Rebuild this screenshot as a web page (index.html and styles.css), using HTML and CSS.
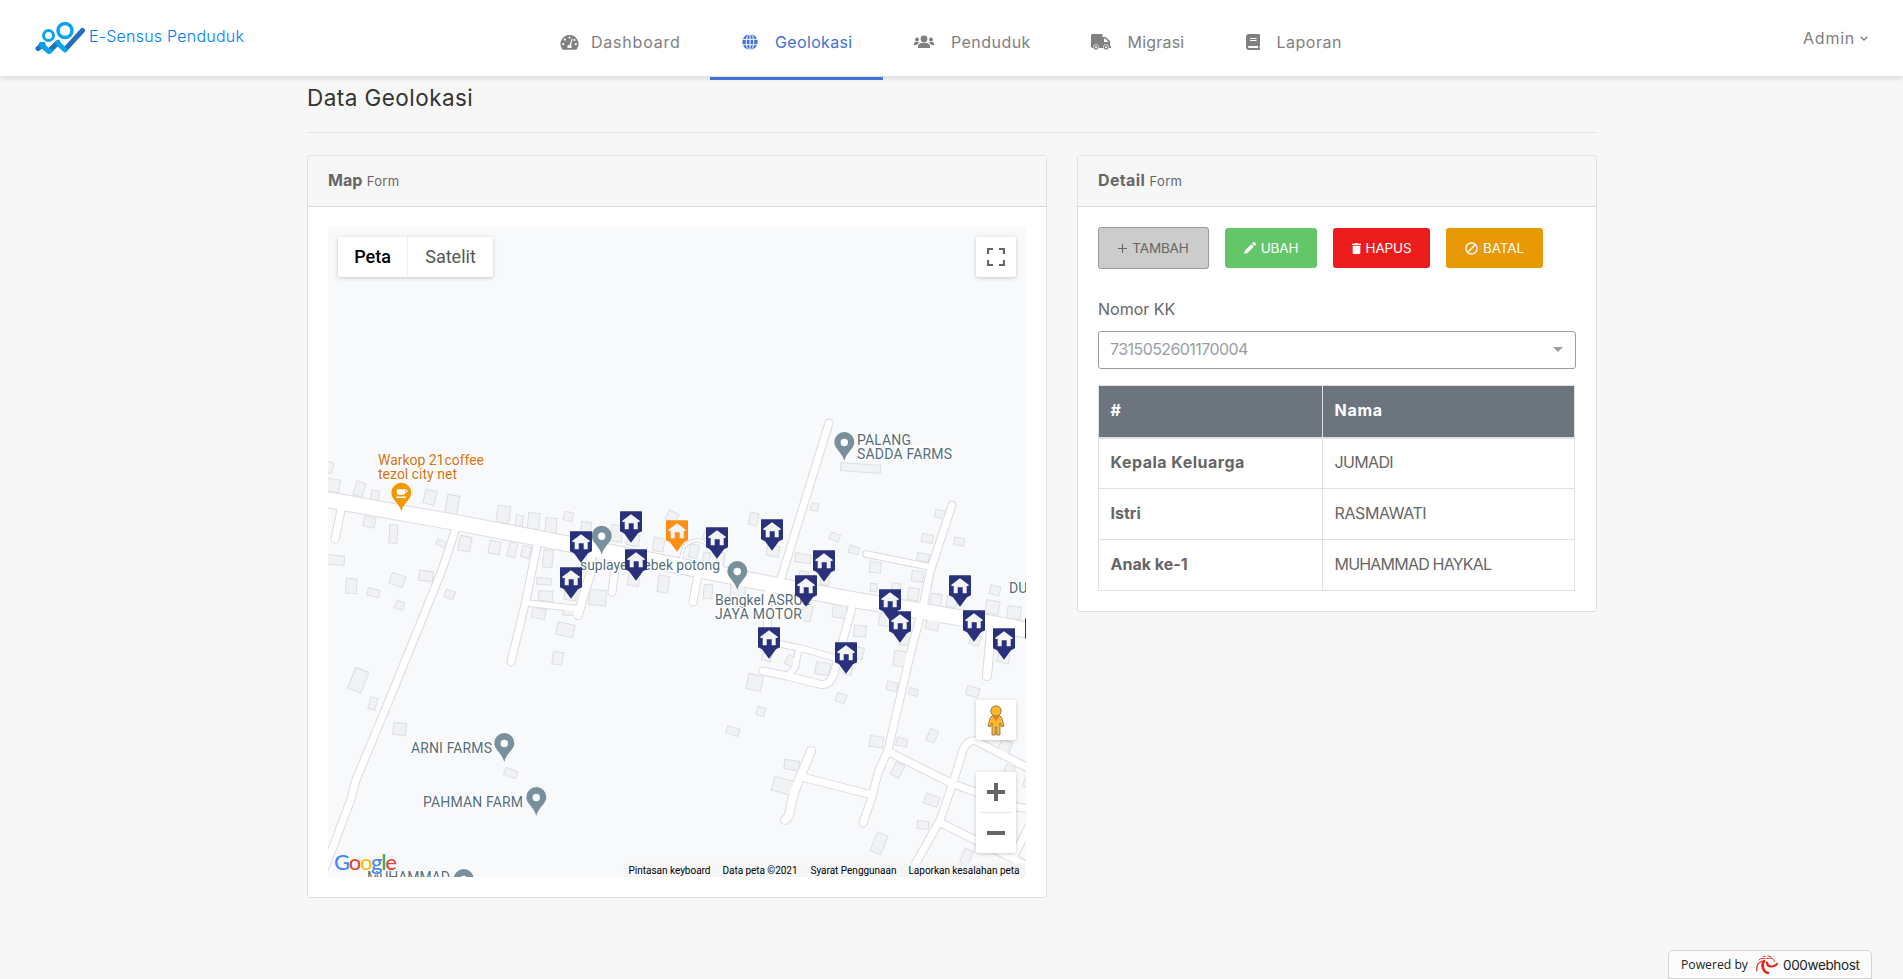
FILE: index.html
```
<!DOCTYPE html>
<html lang="id">
<head>
<meta charset="utf-8">
<title>E-Sensus Penduduk</title>
<link rel="stylesheet" href="styles.css">
</head>
<body>
<header class="topbar">
  <a class="brand">
    <svg class="brand-logo" viewBox="0 0 50 34" width="50" height="34" fill="none">
      <path d="M3 27.500l5-4M15 29.500l8-8M31 27.500L47.500 9.500" stroke="#2470b8" stroke-width="5" stroke-linecap="round"/>
      <path d="M6 23.500l8 7 8.500-8.500L30 29" stroke="#0ba3ec" stroke-width="5" stroke-linecap="round" stroke-linejoin="round"/>
      <path d="M16 28l5-5" stroke="#2470b8" stroke-width="4.500"/>
      <circle cx="13.500" cy="14.500" r="5" stroke="#0ba3ec" stroke-width="3"/>
      <circle cx="30" cy="9.500" r="7" stroke="#0ba3ec" stroke-width="3.500"/>
    </svg>
    <span class="brand-name">E-Sensus Penduduk</span>
  </a>
  <nav class="menu">
    <a class="menu-item item-dash">
      <svg viewBox="0 0 18 15" width="19" height="15"><path fill="currentColor" d="M9 0a9 9 0 0 0-7.500 14c.3.500.7.700 1.200.700h12.600c.5 0 .9-.2 1.200-.7A9 9 0 0 0 9 0z"/><g fill="#fff"><circle cx="9" cy="2.500" r="1.100"/><circle cx="4.300" cy="4.600" r="1.100"/><circle cx="2.700" cy="9.200" r="1.100"/><circle cx="15.300" cy="9.200" r="1.100"/><circle cx="14" cy="5" r="1.100"/><path d="M11.300 3.400l1 .3-1.800 6.400a2.200 2.200 0 0 1 .4 3H7.200a2.200 2.200 0 0 1 2-3.400z"/></g></svg>
      <span class="t-dash">Dashboard</span>
    </a>
    <a class="menu-item item-geo active">
      <svg viewBox="0 0 16 16" width="16" height="16"><circle cx="8" cy="8" r="7.700" fill="currentColor"/><path d="M0 5.300h16M0 10.700h16M8 0v16" stroke="#fff" stroke-width="1"/><ellipse cx="8" cy="8" rx="3.800" ry="8" fill="none" stroke="#fff"/></svg>
      <span class="t-geo">Geolokasi</span>
    </a>
    <a class="menu-item item-pend">
      <svg viewBox="0 0 20 14" width="20" height="14" fill="currentColor"><circle cx="10" cy="4" r="3.400"/><circle cx="3" cy="4.500" r="2"/><circle cx="17" cy="4.500" r="2"/><path d="M4 13v-1.500C4 9.300 5.500 8 7.500 8h5c2 0 3.500 1.300 3.500 3.500V13zM0 10V8.500C0 7.600.8 7 1.800 7h2.500l1 .5C4 8.200 3.300 9 3.100 10zM20 10V8.500c0-.9-.8-1.500-1.800-1.500h-2.500l-1 .5c1.300.7 2 1.500 2.200 2.500z"/></svg>
      <span class="t-pend">Penduduk</span>
    </a>
    <a class="menu-item item-mig">
      <svg viewBox="0 0 20 16" width="20" height="16"><path fill="currentColor" d="M1.500 0h9c.6 0 1 .4 1 1v2h2.700c.4 0 .7.100 1 .4l3.400 3.400c.3.300.4.600.4 1V12h1v2H1.500A1.500 1.500 0 0 1 0 12.500v-11C0 .7.7 0 1.500 0z"/><path fill="#fff" d="M13 4.500h1.200L17.500 8H13z"/><g fill="currentColor" stroke="#fff" stroke-width=".6"><circle cx="5" cy="13.200" r="2.700"/><circle cx="15" cy="13.200" r="2.700"/></g><circle cx="5" cy="13.200" r="1" fill="#fff"/><circle cx="15" cy="13.200" r="1" fill="#fff"/></svg>
      <span class="t-mig">Migrasi</span>
    </a>
    <a class="menu-item item-lap">
      <svg viewBox="0 0 14 16" width="14" height="16"><path fill="currentColor" d="M3 0h10.200c.5 0 .8.300.8.800v10.400c0 .3-.1.500-.3.600-.1.500-.1 1.700 0 2.200.2.200.3.300.3.600v.6c0 .5-.3.800-.8.800H3a3 3 0 0 1-3-3V3a3 3 0 0 1 3-3z"/><path d="M4 4.500h6.500M4 6.500h6.500" stroke="#fff"/><path d="M3 12h9v2H3a1 1 0 0 1 0-2z" fill="#fff"/></svg>
      <span class="t-lap">Laporan</span>
    </a>
  </nav>
  <div class="account"><span class="t-admin">Admin</span><svg viewBox="0 0 8 5" width="8" height="5"><path d="M.7.700L4 4 7.300.700" fill="none" stroke="#808080" stroke-width="1.300"/></svg></div>
</header>

<main class="page">
  <h1 class="title">Data Geolokasi</h1>
  <div class="cards">
    <section class="card card-map">
      <div class="card-head"><strong class="t-map">Map</strong> <small>Form</small></div>
      <div class="card-body">
        <div class="map">
          <svg class="map-canvas" viewBox="328 227 698 650" width="698" height="650">
            <defs>
              <g id="roads" fill="none" stroke-linecap="round" stroke-linejoin="round">
                <path class="w15" d="M318 498L453 522L553 541L680 566L780 586L850 599L927 612L1000 625L1036 632"/>
                <path class="w7" d="M341 510L335 539M456 528L442 570L397 681L356 780L351 799L330 855L320 880M537 546L526 600L511 662M616 560L612 592M698 575L693 602M829 423L803 507L779 585M952 505L930 572L923 607L913 643L909 660L888 750L878 773L872 797L863 823M768 585L767 640M853 604L843 640L834 674Q829 687 819 684L787 676L763 671"/>
                <path class="w7" d="M802 777L872 795M889 752L953 784L976 792L1017 807L1036 810M912 870L905 884M912 870L940 820L953 783L963 750Q968 739 976 741L1034 771M941 823L1036 870M1032 820L1013 858"/>
                <path class="w5" d="M527 603L580 609M866 554L930 567M775 643L800 648L835 658M799 648L795 668L787 676"/>
                <path class="w8" d="M592 550L590 575L583 597L578 615M991 630L987 676M811 751L798 782L792 800L789 816L785 820"/>
                <path class="w2" d="M680 562L684 547Q692 538 702 541Q715 548 722 566"/>
              </g>
            </defs>
            <rect x="328" y="227" width="698" height="650" fill="#f8f9fb"/>
            <use href="#roads" class="road-edge"/>
            <g id="buildings" class="buildings"></g>
            <use href="#roads" class="road-fill"/>
            <g id="places"></g>
            <g class="labels">
              <g class="food">
                <text x="378" y="465" textLength="106">Warkop 21coffee</text>
                <text x="378" y="479" textLength="79">tezol city net</text>
              </g>
              <text x="580" y="570" textLength="140">suplayer bebek potong</text>
              <text x="715" y="605" textLength="95">Bengkel ASRUL</text>
              <text x="715" y="619" textLength="87">JAYA MOTOR</text>
              <text x="857" y="445" textLength="54">PALANG</text>
              <text x="857" y="459" textLength="95">SADDA FARMS</text>
              <text x="411" y="753" textLength="81">ARNI FARMS</text>
              <text x="423" y="807" textLength="100">PAHMAN FARM</text>
              <text x="367" y="882" textLength="83">MUHAMMAD</text>
              <text x="1009" y="593">DU</text>
            </g>
            <g id="houses"></g>
            <rect x="623" y="863" width="403" height="14" fill="#f5f5f5" fill-opacity=".8"/>
            <g class="credits">
              <text x="628.500" y="873.500" textLength="82">Pintasan keyboard</text>
              <text x="722.500" y="873.500" textLength="75">Data peta ©2021</text>
              <text x="810.500" y="873.500" textLength="86">Syarat Penggunaan</text>
              <text x="908.500" y="873.500" textLength="111">Laporkan kesalahan peta</text>
            </g>
            <text class="google" x="334" y="870" textLength="63"><tspan fill="#4285f4">G</tspan><tspan fill="#ea4335">o</tspan><tspan fill="#fbbc05">o</tspan><tspan fill="#4285f4">g</tspan><tspan fill="#34a853">l</tspan><tspan fill="#ea4335">e</tspan></text>
          </svg>
          <div class="map-types"><span class="type-on">Peta</span><span class="type-off">Satelit</span></div>
          <div class="map-btn full"><svg viewBox="0 0 18 18" width="18" height="18"><path d="M1 6V1h5M12 1h5v5M17 12v5h-5M6 17H1v-5" fill="none" stroke="#666" stroke-width="2.200"/></svg></div>
          <div class="map-btn pegman"><svg viewBox="0 0 18 31" width="18" height="31"><path d="M5.500 10.500h7l2.500 3 2 7.500-2 1-2-4v12H9.700v-8H8.300v8H5V18l-2 4-2-1 2-7.500z" fill="#fbb928" stroke="#8a7250" stroke-width=".9"/><path d="M5.500 11h7L9 16.500z" fill="#e8822b"/><circle cx="9" cy="6" r="5.200" fill="#fbb928" stroke="#8a7250" stroke-width=".9"/></svg></div>
          <div class="zoom"><div class="zoom-half"><svg viewBox="0 0 18 18" width="18" height="18"><path d="M9 0v18M0 9h18" stroke="#666" stroke-width="4"/></svg></div><div class="zoom-half"><svg viewBox="0 0 18 18" width="18" height="18"><path d="M0 9h18" stroke="#666" stroke-width="4"/></svg></div></div>
        </div>
      </div>
    </section>
    <section class="card card-detail">
      <div class="card-head"><strong class="t-detail">Detail</strong> <small>Form</small></div>
      <div class="card-body">
        <div class="buttons">
          <button class="btn add"><svg viewBox="0 0 9 9" width="9" height="9"><path d="M4.500 0v9M0 4.500h9" stroke="#666"/></svg>TAMBAH</button>
          <button class="btn edit"><svg viewBox="0 0 12 12" width="12" height="12"><path d="M0 12l1-3.500L7.200 2.300l2.500 2.500L3.500 11zM8 1.500L9.200.3c.4-.4.9-.4 1.300 0l1.200 1.200c.4.400.4.900 0 1.300L10.500 4z" fill="#fff"/></svg>UBAH</button>
          <button class="btn del"><svg viewBox="0 0 9 11" width="9" height="11"><path d="M0 .7h2.700L3.200 0h2.600l.5.700H9v1.300H0zM.7 2.800h7.600V10c0 .6-.4 1-1 1H1.700c-.6 0-1-.4-1-1z" fill="#fff"/></svg>HAPUS</button>
          <button class="btn cancel"><svg viewBox="0 0 13 13" width="13" height="13"><circle cx="6.500" cy="6.500" r="5.500" fill="none" stroke="#fff" stroke-width="1.400"/><path d="M2.800 10.200l7.400-7.400" stroke="#fff" stroke-width="1.400"/></svg>BATAL</button>
        </div>
        <div class="label">Nomor KK</div>
        <div class="select"><span class="t-kk">7315052601170004</span><i class="caret"></i></div>
        <table class="family">
          <thead><tr><th>#</th><th class="t-nama">Nama</th></tr></thead>
          <tbody>
            <tr><th class="t-kepala">Kepala Keluarga</th><td class="t-jum">JUMADI</td></tr>
            <tr><th>Istri</th><td class="t-ras">RASMAWATI</td></tr>
            <tr><th>Anak ke-1</th><td class="t-muh">MUHAMMAD HAYKAL</td></tr>
          </tbody>
        </table>
      </div>
    </section>
  </div>
</main>

<div class="host">
  <span class="host-by">Powered by</span>
  <svg viewBox="0 0 24 20" width="24" height="20" fill="none" stroke="#e1251b" stroke-linecap="round"><path d="M9 6C6 10 8 17 13 18" stroke-width="2.600"/><path d="M12 7.500c0 4.500 6 5.500 10 1.500" stroke-width="2.200"/><path d="M7 6C3.500 7.500 1 11 2 16" stroke-width="1.200"/><path d="M12 3.500c4-1 7 0 7.500 3M4 5c2-2 4-2 6-1.500M13.500 1l2.500.8M8.500 1.500l1.500-.3" stroke-width="1"/></svg>
  <span class="host-name">000webhost</span>
</div>
<script src="map.js"></script>
</body>
</html>
```

FILE: styles.css
```
* { box-sizing: border-box; }
body {
  margin: 0;
  height: 979px;
  overflow: hidden;
  background: #f7f7f7;
  color: #666;
  font: 16px/24px Inter, "Open Sans", sans-serif;
}
svg { display: block; flex: none; }

.topbar {
  position: relative;
  display: flex;
  height: 76px;
  background: #fff;
  box-shadow: 0 2px 6px rgba(0, 0, 0, .13);
}
.brand { display: flex; width: 530px; padding: 21px 0 0 35px; gap: 4px; color: #007bff; }
.brand-name { margin-top: 3px; white-space: nowrap; font-weight: 300; letter-spacing: .23px; }
.menu { display: grid; grid-template-columns: 180px 173px 178px 155px 158px; height: 80px; color: #808080; }
.menu-item { display: flex; align-items: center; gap: 17px; padding: 4px 0 0 31px; white-space: nowrap; }
.menu-item span { margin-top: -1px; }
.item-dash { gap: 12px; padding-left: 30px; }
.item-mig { gap: 17px; padding-left: 29.5px; }
.item-lap { padding-left: 29.5px; }
.item-geo { padding-left: 32px; }
.active { color: #4272d7; border-bottom: 3px solid #4272d7; padding-top: 7px; }
.t-dash { letter-spacing: .78px; }
.t-geo { letter-spacing: .35px; }
.t-pend { letter-spacing: .45px; }
.t-mig { letter-spacing: .2px; }
.t-lap { letter-spacing: .5px; }
.account { display: flex; gap: 5px; margin-left: auto; padding: 26px 35px 0 0; color: #808080; }
.account svg { margin-top: 10px; }
.t-admin { letter-spacing: .75px; }

.page { width: 1290px; margin-left: 307px; }
.title { margin: 0; padding: 6px 0 18px; height: 57px; border-bottom: 1px solid #e1e1e1; color: #333; font-size: 22.5px; line-height: 32px; font-weight: 400; letter-spacing: .45px; }
.cards { display: flex; align-items: flex-start; gap: 30px; margin-top: 22px; }
.card { background: #fff; border: 1px solid #dfdfdf; border-radius: 3px; }
.card-map { width: 740px; height: 743px; }
.card-detail { width: 520px; height: 457px; }
.card-head { height: 51px; padding: 12px 20px; background: #f7f7f7; border-bottom: 1px solid #d9d9d9; white-space: nowrap; }
.card-head strong { font-weight: 700; }
.card-head small { font-size: 13px; letter-spacing: .3px; }
.t-detail { letter-spacing: .35px; }
.card-body { padding: 20px; }

.map { position: relative; width: 698px; height: 650px; overflow: hidden; }
.buildings rect { fill: #f1f2f4; stroke: #dcdee2; stroke-width: 1; }
.road-edge { stroke: #d8dbe1; }
.road-fill { stroke: #fff; }
.w15 { stroke-width: 15px; }
.w8 { stroke-width: 8px; }
.w7 { stroke-width: 7px; }
.w5 { stroke-width: 5.5px; }
.w2 { stroke-width: 2px; }
.labels { font: 14px Roboto, sans-serif; fill: #546e7a; stroke: #fff; stroke-width: 2.5px; paint-order: stroke; }
.food { fill: #d5700f; }
.credits { font: 10px Roboto, sans-serif; fill: #000; }
.google { font: 500 22px Lato, sans-serif; stroke: #fff; stroke-width: 1px; paint-order: stroke; }

.map-types { position: absolute; left: 10px; top: 10px; display: flex; height: 40px; background: #fff; border-radius: 2px; box-shadow: 0 1px 4px rgba(0, 0, 0, .2); font: 18px/40px Roboto, sans-serif; }
.type-on { width: 70px; text-align: center; color: #000; font-weight: 500; border-right: 1px solid #eee; }
.type-off { width: 85px; text-align: center; color: #565656; }
.map-btn, .zoom { position: absolute; left: 648px; width: 40px; background: #fff; border-radius: 2px; box-shadow: 0 1px 4px rgba(0, 0, 0, .2); }
.map-btn { display: grid; place-items: center; height: 40px; }
.full { top: 10px; }
.pegman { top: 473px; }
.zoom { top: 545px; height: 81px; padding: 0 5px; }
.zoom-half { display: grid; place-items: center; height: 40px; }
.zoom-half + .zoom-half { height: 41px; border-top: 1px solid #e6e6e6; }

.buttons { display: flex; align-items: center; height: 42px; gap: 16px; }
.btn { display: flex; align-items: center; justify-content: center; gap: 5px; height: 40px; padding: 0; border: 0; border-radius: 3px; color: #fff; font: 13.5px Inter, sans-serif; letter-spacing: -.15px; }
.add { width: 111px; height: 42px; background: #ccc; border: 1px solid #999; color: #666; }
.edit { width: 92px; background: #63c76a; }
.del { width: 97px; background: #ed1c1c; }
.cancel { width: 97px; background: #e99806; }
.label { margin-top: 28px; }
.select { display: flex; align-items: center; justify-content: space-between; width: 478px; height: 38px; margin-top: 10px; padding: 0 12px 2px 11px; border: 1px solid #999ea5; border-radius: 3px; color: #999ea5; }
.t-kk { letter-spacing: -.57px; }
.caret { margin-top: 1px; border: 5px solid transparent; border-top-color: #999ea5; border-bottom: 0; }
.family { width: 477px; margin-top: 16px; border-collapse: collapse; table-layout: fixed; }
.family th, .family td { height: 51px; padding: 0 11.5px 2px; border: 1px solid #dee2e6; text-align: left; white-space: nowrap; }
.family th { font-weight: 700; }
.family th:first-child { width: 224px; }
.family thead th { height: 52px; background: #6c757d; color: #fff; border-bottom-width: 2px; }
.family .t-nama { letter-spacing: .7px; }
.t-kepala { letter-spacing: .5px; }
.t-jum { letter-spacing: -.65px; }
.t-ras { letter-spacing: -.4px; }
.t-muh { letter-spacing: -.8px; }

.host { position: absolute; left: 1668px; top: 950px; display: flex; align-items: center; width: 204px; height: 29px; padding-left: 12px; background: #fcfcfc; border: 1px solid #d3d3d3; border-radius: 5px 5px 0 0; color: #222; font: 12.2px "Open Sans", sans-serif; white-space: nowrap; }
.host svg { margin: 0 4px 0 7px; }
.host-name { font: 13.5px Inter, sans-serif; letter-spacing: -.35px; }
```

FILE: map.js
```
const NS = "http://www.w3.org/2000/svg";
function add(parent, tag, attrs) {
  const el = document.createElementNS(NS, tag);
  for (const key in attrs) el.setAttribute(key, attrs[key]);
  parent.appendChild(el);
  return el;
}

// Each tile: origin, then buildings as [cx, cy, width, height, angle] at three units per pixel.
const tiles = [
  [320, 440, [[28,82,20,32,15],[38,136,42,38,10],[118,147,28,42,17],[165,166,24,28,10],[148,246,34,30,12],[220,282,24,56,3],[330,172,34,42,14],[397,193,36,54,10],[364,310,30,16,25],[46,360,54,28,6],[435,311,36,44,10],[524,323,34,38,10],[550,223,38,50,8],[598,242,22,32,8],[641,243,34,48,5],[577,330,24,42,14],[618,336,26,34,14],[693,256,34,44,5],[745,229,26,26,14],[798,262,30,32,8],[684,356,28,52,5],[672,424,44,20,5],[94,438,32,44,4],[232,420,42,34,20],[160,458,36,22,14],[239,496,24,24,22],[318,408,42,30,8],[389,463,28,24,18],[656,520,40,30,12],[677,468,42,30,4],[750,512,40,28,5],[736,569,52,38,12],[713,655,30,38,8],[833,473,50,46,5],[850,370,44,40,5],[890,280,34,50,8],[940,300,36,34,10],[1056,230,32,30,30],[1016,314,32,40,8],[941,418,34,38,10],[1030,432,32,50,8],[752,460,36,40,8],[119,708,40,40,22]]],
  [680, 400, [[542,204,120,24,4],[404,321,22,22,14],[221,357,26,36,14],[464,411,30,22,20],[522,450,30,22,16],[279,453,38,32,8],[369,475,48,26,8],[371,525,26,22,8],[41,454,26,40,12],[80,470,20,26,10],[85,405,28,26,20],[122,475,22,34,8],[84,575,26,42,4],[173,575,44,50,5],[586,502,34,32,6],[581,563,20,24,6],[648,563,26,26,8],[780,342,28,24,10],[742,415,34,24,12],[838,425,30,22,10],[729,472,36,22,10],[712,529,34,32,8],[700,582,32,36,10],[768,599,32,34,8],[815,605,30,34,10],[945,571,30,26,14],[937,622,40,40,10],[1002,638,40,38,8],[479,634,42,38,6],[435,540,26,30,10],[380,640,30,46,14],[540,693,36,34,6],[617,658,38,40,8],[672,722,30,26,8],[757,675,38,28,14],[661,776,40,46,8],[536,759,28,34,14],[505,810,22,28,14],[262,765,28,36,14],[333,783,30,30,25],[428,806,42,36,8],[224,847,44,46,12],[885,720,30,32,18],[970,775,36,26,14]]],
  [320, 660, [[115,61,42,66,22],[159,130,22,36,16],[239,207,38,36,6],[572,339,38,22,20]]],
  [680, 660, [[483,114,30,26,18],[243,154,24,26,16],[158,213,38,22,16],[636,79,32,26,12],[700,96,26,20,16],[878,95,38,28,16],[589,245,40,32,8],[665,247,32,24,14],[757,227,26,36,24],[335,315,44,28,8],[310,378,64,42,16],[653,330,28,40,26],[755,421,42,30,20],[729,495,34,24,6],[597,550,34,60,22],[860,590,28,44,22],[975,260,34,36,20],[988,330,28,26,20],[1042,365,20,36,20]]]
];
const buildings = document.getElementById("buildings");
for (const [ox, oy, list] of tiles) {
  for (const [cx, cy, w, h, a] of list) {
    add(buildings, "rect", {
      x: -w / 6, y: -h / 6, width: w / 3, height: h / 3,
      transform: `translate(${ox + cx / 3} ${oy + cy / 3}) rotate(${a})`
    });
  }
}

// Road casings are one pixel wider on each side than the road surface.
const edge = document.querySelector(".road-edge");
const casing = document.getElementById("roads").cloneNode(true);
casing.removeAttribute("id");
casing.setAttribute("class", "road-edge");
const widths = { w15: 17, w8: 10, w7: 9, w5: 7.5, w2: 4 };
for (const p of casing.children) {
  p.style.strokeWidth = widths[p.getAttribute("class")] + "px";
}
edge.replaceWith(casing);

const places = document.getElementById("places");
for (const [x, y, coffee] of [[601.7,525.7],[844.3,432],[737.3,561],[504.3,733],[536.3,787],[463.7,869],[401.3,482.7,true]]) {
  const g = add(places, "g", { transform: `translate(${x} ${y})` });
  add(g, "path", { d: "M0 0a10 10 0 0 1 10 10c0 7-8 10-10 19C-2 20-10 17-10 10A10 10 0 0 1 0 0z", fill: coffee ? "#f29900" : "#78909c" });
  if (coffee) {
    add(g, "path", { d: "M-4.500 6.500h8.500v3.500q0 2-2 2h-4.500q-2 0-2-2zM-5 13.800h9.500v1.400H-5z", fill: "#fff" });
    add(g, "circle", { cx: 4.4, cy: 8.4, r: 1.4, fill: "none", stroke: "#fff" });
  } else {
    add(g, "circle", { cx: 0, cy: 10.5, r: 3.7, fill: "#fff" });
  }
}

const houses = document.getElementById("houses");
const pins = [[581,531],[631,511],[677,520,"#ff8f14"],[636,549],[571,567],[717,527],[772,519],[824,550],[806,575],[890,589],[900,611],[960,575],[974,610],[1004,628],[769,627],[846,642],[1036,618]];
for (const [x, y, color] of pins) {
  const g = add(houses, "g", { transform: `translate(${x} ${y + 0.3})` });
  add(g, "path", { d: "M-11 .500q0-.500.500-.500h21q.500 0 .500.500V20L7 22 0 31.500-7 22l-4-2z", fill: color || "#283179" });
  add(g, "path", { d: "M0 3l9 6.700-1 1.300-1.300-.600V18H2.700v-6h-5v6h-4v-7.600L-8 11l-1-1.300z", fill: "#f4f5f8" });
}
```
